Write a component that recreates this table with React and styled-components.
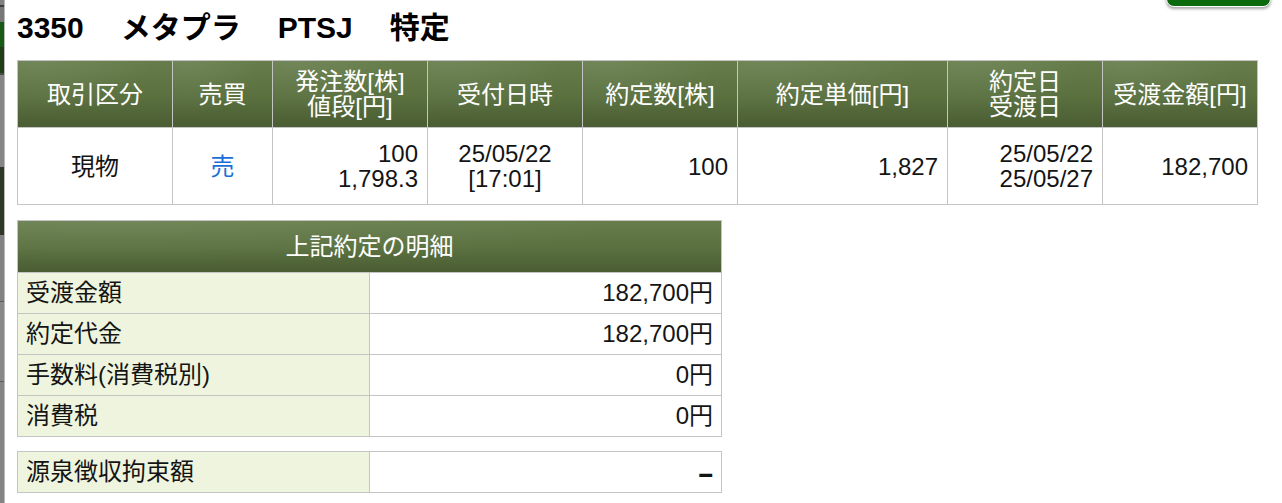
import React from "react";
import styled, { createGlobalStyle } from "styled-components";

const GlobalStyle = createGlobalStyle`
  html,
  body {
    margin: 0;
    padding: 0;
    background: #fff;
  }
  body {
    font-family: "Liberation Sans", "Noto Sans CJK JP", sans-serif;
    color: #141414;
  }
`;

const Screen = styled.div`
  display: flex;
  width: 1282px;
  height: 503px;
  overflow: hidden;
`;

// dimmed slice of the page behind the dialog
const Backdrop = styled.div`
  flex: none;
  width: 4px;
  display: flex;
  flex-direction: column;
  border-right: 1px solid #b8b8b8;
`;

const Shade = styled.div`
  flex: ${props => (props.$h ? "none" : "1")};
  height: ${props => (props.$h ? `${props.$h}px` : "auto")};
  background: ${props => props.$c};
`;

const Panel = styled.div`
  flex: 1;
  display: flex;
  flex-direction: column;
  align-items: flex-start;
  padding: 11px 0 0 12px;
  background: #fff;
`;

const TitleBar = styled.div`
  align-self: stretch;
  display: flex;
  align-items: flex-start;
  justify-content: space-between;
  margin-bottom: 15px;
`;

const Title = styled.h1`
  display: flex;
  gap: 37px;
  margin: 0;
  font-size: 30px;
  line-height: 34px;
  font-weight: bold;
  color: #000;
`;

const CloseButton = styled.button`
  flex: none;
  width: 105px;
  height: 40px;
  margin: -44px 11px 0 0;
  background: #0b6a0b;
  border: 1px solid #fff;
  border-radius: 8px;
  box-shadow: 0 2px 3px rgba(0, 0, 0, 0.35);
`;

const Grid = styled.div`
  display: grid;
  grid-template-columns: ${props => props.$cols};
  gap: 1px;
  background: #c4c4c4;
  border: 1px solid #c4c4c4;
  margin-top: ${props => props.$top || 0}px;
`;

const HeadCell = styled.div`
  grid-column: ${props => (props.$span ? "1 / -1" : "auto")};
  height: ${props => props.$h}px;
  display: flex;
  align-items: center;
  justify-content: center;
  text-align: center;
  background: radial-gradient(
      ellipse at 15% 0%,
      rgba(255, 255, 255, 0.08),
      rgba(255, 255, 255, 0) 60%
    ),
    linear-gradient(to bottom, #667d4b 0%, #5a703f 55%, #4a5d33 100%);
  color: #fff;
  font-size: 24px;
  line-height: 25px;
`;

const Cell = styled.div`
  height: 76px;
  display: flex;
  align-items: center;
  justify-content: ${props =>
    props.$align === "right" ? "flex-end" : "center"};
  text-align: ${props => props.$align || "center"};
  padding: 0 9px;
  background: #fff;
  color: ${props => props.$color || "#141414"};
  font-size: 24px;
  line-height: 25px;
`;

const Label = styled.div`
  height: 40px;
  display: flex;
  align-items: center;
  padding: 0 8px;
  background: #eff4de;
  font-size: 24px;
  line-height: 26px;
`;

const Value = styled.div`
  height: 40px;
  display: flex;
  align-items: center;
  justify-content: flex-end;
  padding: 0 8px;
  background: #fff;
  font-size: 24px;
  line-height: 26px;
`;

const Dash = styled.span`
  font-weight: bold;
  font-size: 26px;
  transform: scaleY(1.3);
`;

const shades = [
  [5, "#808080"],
  [2, "#3c3c3c"],
  [15, "#777"],
  [25, "#165a14"],
  [26, "#1f3d16"],
  [2, "#4c4c4c"],
  [92, "#868686"],
  [68, "#2f3826"],
  [66, "#828282"],
  [1, "#5c5c5c"],
  [79, "#888"],
  [1, "#5c5c5c"],
  [0, "#848484"]
];

const mainCols = "154px 99px 154px 154px 154px 209px 154px 154px";
const detailCols = "351px 351px";

const heads = [
  "取引区分",
  "売買",
  ["発注数[株]", "値段[円]"],
  "受付日時",
  "約定数[株]",
  "約定単価[円]",
  ["約定日", "受渡日"],
  "受渡金額[円]"
];

const row = [
  { text: "現物" },
  { text: "売", color: "#1a6fd6" },
  { text: ["100", "1,798.3"], align: "right" },
  { text: ["25/05/22", "[17:01]"] },
  { text: "100", align: "right" },
  { text: "1,827", align: "right" },
  { text: ["25/05/22", "25/05/27"], align: "right" },
  { text: "182,700", align: "right" }
];

const details = [
  ["受渡金額", "182,700円"],
  ["約定代金", "182,700円"],
  ["手数料(消費税別)", "0円"],
  ["消費税", "0円"]
];

const Lines = ({ text }) =>
  Array.isArray(text) ? (
    <span>
      {text[0]}
      <br />
      {text[1]}
    </span>
  ) : (
    <span>{text}</span>
  );

const App = () => (
  <Screen>
    <GlobalStyle />
    <Backdrop>
      {shades.map(([h, c], i) => (
        <Shade key={i} $h={h} $c={c} />
      ))}
    </Backdrop>
    <Panel>
      <TitleBar>
        <Title>
          <span>3350</span>
          <span>メタプラ</span>
          <span>PTSJ</span>
          <span>特定</span>
        </Title>
        <CloseButton aria-label="閉じる" />
      </TitleBar>

      <Grid $cols={mainCols}>
        {heads.map((h, i) => (
          <HeadCell key={i} $h={66}>
            <Lines text={h} />
          </HeadCell>
        ))}
        {row.map((c, i) => (
          <Cell key={i} $align={c.align} $color={c.color}>
            <Lines text={c.text} />
          </Cell>
        ))}
      </Grid>

      <Grid $cols={detailCols} $top={15}>
        <HeadCell $span $h={51}>
          上記約定の明細
        </HeadCell>
        {details.map(([label, value]) => (
          <React.Fragment key={label}>
            <Label>{label}</Label>
            <Value>{value}</Value>
          </React.Fragment>
        ))}
      </Grid>

      <Grid $cols={detailCols} $top={14}>
        <Label>源泉徴収拘束額</Label>
        <Value>
          <Dash>–</Dash>
        </Value>
      </Grid>
    </Panel>
  </Screen>
);

export default App;
